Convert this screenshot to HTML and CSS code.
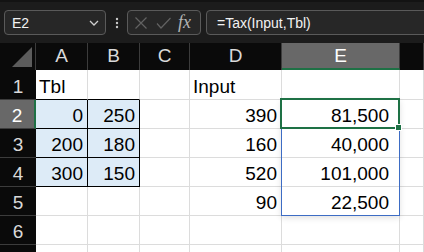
FILE: index.html
```html
<!DOCTYPE html>
<html>
<head>
  <title>Tax</title>
  <meta charset="UTF-8">
  <link rel="stylesheet" href="styles.css">
</head>
<body>
  <div class="toolbar">
    <div class="namebox">
      <span>E2</span>
      <svg class="chevron" width="10" height="6" viewBox="0 0 10 6"><polyline points="1,1 5,5 9,1" fill="none" stroke="#cfcfcf" stroke-width="1.3"/></svg>
    </div>
    <svg class="dots" width="4" height="12" viewBox="0 0 4 12"><circle cx="2" cy="2" r="1.2" fill="#c8c8c8"/><circle cx="2" cy="6" r="1.2" fill="#c8c8c8"/><circle cx="2" cy="10" r="1.2" fill="#c8c8c8"/></svg>
    <div class="fxbox">
      <svg width="14" height="14" viewBox="0 0 14 14"><path d="M1.5 1.5 L12.5 12.5 M12.5 1.5 L1.5 12.5" stroke="#626262" stroke-width="1.2" fill="none"/></svg>
      <svg width="16" height="14" viewBox="0 0 16 14"><polyline points="1,7.5 5,12 14.5,2" stroke="#626262" stroke-width="1.2" fill="none"/></svg>
      <span class="fx">fx</span>
    </div>
    <div class="formula">=Tax(Input,Tbl)</div>
  </div>

  <div class="sheet">
    <div class="corner"><svg width="22" height="21" viewBox="0 0 22 21"><polygon points="21,0 21,20 1,20" fill="#5c5c5c"/></svg></div>
    <div class="colhead">A</div>
    <div class="colhead">B</div>
    <div class="colhead">C</div>
    <div class="colhead">D</div>
    <div class="colhead selected">E</div>
    <div class="colhead"></div>

    <div class="rowhead">1</div>
    <div class="cell text tbl-top">Tbl</div>
    <div class="cell tbl-top"></div>
    <div class="cell"></div>
    <div class="cell text">Input</div>
    <div class="cell"></div>
    <div class="cell"></div>

    <div class="rowhead selected">2</div>
    <div class="cell tbl">0</div>
    <div class="cell tbl">250</div>
    <div class="cell"></div>
    <div class="cell">390</div>
    <div class="cell result">81,500</div>
    <div class="cell"></div>

    <div class="rowhead">3</div>
    <div class="cell tbl">200</div>
    <div class="cell tbl">180</div>
    <div class="cell"></div>
    <div class="cell">160</div>
    <div class="cell result">40,000</div>
    <div class="cell"></div>

    <div class="rowhead">4</div>
    <div class="cell tbl">300</div>
    <div class="cell tbl">150</div>
    <div class="cell"></div>
    <div class="cell">520</div>
    <div class="cell result">101,000</div>
    <div class="cell"></div>

    <div class="rowhead">5</div>
    <div class="cell"></div>
    <div class="cell"></div>
    <div class="cell"></div>
    <div class="cell">90</div>
    <div class="cell result">22,500</div>
    <div class="cell"></div>

    <div class="rowhead">6</div>
    <div class="cell"></div>
    <div class="cell"></div>
    <div class="cell"></div>
    <div class="cell"></div>
    <div class="cell"></div>
    <div class="cell"></div>

    <div class="rowhead"></div>
    <div class="cell"></div>
    <div class="cell"></div>
    <div class="cell"></div>
    <div class="cell"></div>
    <div class="cell"></div>
    <div class="cell"></div>

    <!-- spill range and active cell sit over the grid -->
    <div class="spill"></div>
    <div class="active"><span class="handle"></span></div>
  </div>
</body>
</html>
```

FILE: styles.css
```css
body {
  margin: 0;
  width: 424px;
  height: 252px;
  overflow: hidden;
  background-color: #0a0a0a;
  font-family: "Liberation Sans", Arial, sans-serif;
}
.toolbar {
  height: 43px;
  box-sizing: border-box;
  padding-top: 10px;
  background-color: #1c1c1c;
  border-top: 2px solid #131313;
  display: flex;
  align-items: flex-start;
  overflow: hidden;
}
.toolbar > * {
  flex-shrink: 0;
}
.toolbar > div {
  height: 25px;
  box-sizing: border-box;
  border: 1px solid #5a5a5a;
  border-radius: 4px;
  background-color: #272727;
  display: flex;
  align-items: center;
}
.namebox {
  margin-left: 4px;
  width: 102px;
  padding: 0 6px 0 7px;
  justify-content: space-between;
  color: #f2f2f2;
  font-size: 14px;
  margin-top: -2px;
}
.dots {
  margin: 5px 8px 0 9px;
}
.fxbox {
  width: 74px;
  margin-top: -2px;
  padding-left: 6px;
  gap: 7px;
}
.fxbox svg:nth-child(2) {
  margin-left: 1px;
}
.fx {
  font-family: "Liberation Serif", serif;
  font-style: italic;
  font-size: 18px;
  color: #b4b4b4;
  margin-left: -1px;
}
.formula {
  margin-top: -2px;
  margin-left: 5px;
  width: 240px;
  padding-left: 10px;
  color: #f2f2f2;
  font-size: 14px;
  border-right: none;
}
.sheet {
  position: relative;
  display: grid;
  grid-template-columns: 36px 52px 52px 50px 92px 118px 1fr;
  grid-template-rows: 27px 30px repeat(6, 29px);
  font-size: 19px;
  line-height: 19px;
}
.corner {
  background-color: #0a0a0a;
  border-right: 1px solid #3c3c3c;
  display: flex;
  align-items: flex-start;
  padding: 4px 0 0 11px;
  box-sizing: border-box;
}
.colhead {
  background-color: #0a0a0a;
  color: #d9d9d9;
  border-right: 1px solid #3c3c3c;
  display: flex;
  justify-content: center;
  align-items: flex-end;
  padding-bottom: 5px;
  box-sizing: border-box;
}
.colhead.selected {
  background-color: #686868;
  color: #ffffff;
  border-bottom: 2px solid #1e7145;
  padding-bottom: 3px;
}
.rowhead {
  background-color: #0a0a0a;
  color: #d9d9d9;
  border-bottom: 1px solid #3c3c3c;
  display: flex;
  justify-content: center;
  align-items: flex-end;
  padding-bottom: 3px;
  box-sizing: border-box;
}
.rowhead.selected {
  background-color: #686868;
  color: #ffffff;
  border-right: 2px solid #1e7145;
}
.cell {
  background-color: #ffffff;
  color: #000000;
  border-right: 1px solid #dcdcdc;
  border-bottom: 1px solid #dcdcdc;
  display: flex;
  justify-content: flex-end;
  align-items: flex-end;
  padding: 0 4px 3px 3px;
  box-sizing: border-box;
}
.cell.text {
  justify-content: flex-start;
}
.cell.tbl-top {
  border-bottom-color: #000000;
}
.cell.tbl {
  background-color: #ddebf7;
  border-right-color: #000000;
  border-bottom-color: #000000;
}
.cell.result {
  padding-right: 10px;
}
.spill {
  position: absolute;
  left: 281px;
  top: 56px;
  width: 119px;
  height: 117px;
  box-sizing: border-box;
  border: 1px solid #3d6cc4;
  box-shadow: 0 2px 6px rgba(0, 0, 0, 0.12);
}
.active {
  position: absolute;
  left: 280px;
  top: 55px;
  width: 120px;
  height: 31px;
  box-sizing: border-box;
  border: 2px solid #1e7145;
}
.handle {
  position: absolute;
  right: -3px;
  bottom: -3px;
  width: 5px;
  height: 5px;
  background-color: #1e7145;
  border: 1px solid #ffffff;
  box-sizing: content-box;
  margin: 0 -1px -1px 0;
}
```
